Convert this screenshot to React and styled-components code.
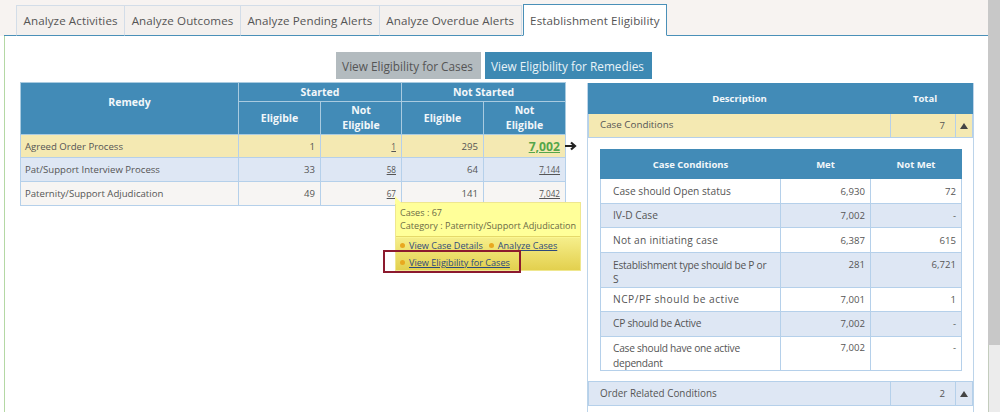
import React from "react";
import styled, { createGlobalStyle } from "styled-components";

const Global = createGlobalStyle`
  html, body { margin: 0; padding: 0; background: #fff; overflow: hidden; }
  body { font-family: "Open Sans", "Liberation Sans", sans-serif; font-size: 10.5px; color: #555; }
  * { box-sizing: border-box; }
`;

const Page = styled.div`
  width: 1000px; height: 412px; display: flex; overflow: hidden; background: #fff;
`;
const Main = styled.div`
  width: 988px; height: 412px; display: flex; flex-direction: column;
`;
const Scrollbar = styled.div`
  width: 12px; height: 412px; background: #ececec; border-left: 1px solid #c3ccbd;
  display: flex; flex-direction: column; flex: none;
`;
const Thumb = styled.div`
  height: 345px; background: #c8c8c8; margin-left: -1px;
`;
const TabHeader = styled.div`
  height: 36px; background: #f7f3f1; padding-top: 5px;
`;
const TabBar = styled.div`
  height: 31px; padding-left: 12px; margin-left: 4px; display: flex; align-items: stretch;
  border-bottom: 1px solid #4a90b8;
`;
const Tab = styled.div`
  padding: 0 6.5px; display: flex; align-items: center; font-size: 11.6px; letter-spacing: 0.1px; color: #555;
  background: #f3f0ee; height: 31px;
  border: 1px solid #d3dde8; border-left-width: ${p => (p.$first ? 1 : 0)}px;
  border-bottom: 1px solid #4a90b8;
`;
const ActiveTab = styled(Tab)`
  background: #fff; height: 32px; margin: -1px 0 0 1px; padding-top: 1px;
  border: 1px solid #4a90b8; border-bottom: 1px solid #fff;
`;
const Content = styled.div`
  flex: 1; margin-left: 4px; border-left: 1px solid #b4d8a4; background: #fff; padding: 16px 14px 0 15px;
`;
const Buttons = styled.div`
  display: flex; justify-content: center; gap: 4px; padding-right: 6px;
`;
const Btn = styled.div`
  height: 27px; padding: 0 8px 0 6px; display: flex; align-items: center; font-size: 11.8px;
  background: ${p => (p.$on ? "#3d89b3" : "#b3bbbf")};
  color: ${p => (p.$on ? "#e9f3f8" : "#555")};
`;
const Columns = styled.div`
  display: flex; align-items: flex-start; margin-top: 3px;
`;
const LeftCol = styled.div`
  width: 545px; position: relative; flex: none;
`;
const RightCol = styled.div`
  width: 387px; margin-left: 22px; flex: none; height: 330px; border-right: 1px solid #bcd4ea; border-left: 1px solid #bcd4ea; margin-top: 1px;
`;
const Table = styled.table`
  border-collapse: collapse; table-layout: fixed; width: 100%;
`;
const Th = styled.th`
  background: #428bb7; color: #f2f7fa; font-weight: 700; font-size: 10.5px; line-height: 15px; padding: 0 4px ${p => p.$pb || 0}px;
  border: 1px solid #a9cbe0; height: ${p => p.$h || 19}px; text-align: center;
`;
const PlainTh = styled(Th)`
  border-color: #428bb7; font-size: 9.5px; padding-left: ${p => p.$pl || 4}px;
`;
const Td = styled.td`
  font-size: ${p => p.$size || 9.6}px; padding: 0 ${p => (p.$right ? 5 : 4)}px; height: ${p => p.$h || 24}px; color: #555;
  border: 1px solid #b5d0ea;
  text-align: ${p => (p.$right ? "right" : "left")};
  background: ${p => p.$bg || "#fff"};
  vertical-align: ${p => (p.$top ? "top" : "middle")};
  padding-top: ${p => (p.$top ? 4.5 : 0)}px;
  letter-spacing: ${p => p.$ls || 0}px;
`;
const Num = styled.span`
  font-size: 8.2px; text-decoration: underline; color: #555;
`;
const BigNum = styled.span`
  font-size: 12.2px; font-weight: 700; color: #55a64a; text-decoration: underline;
`;
const Arrow = styled.svg`
  position: absolute; left: 545px; top: 59px;
`;
const Tip = styled.div`
  position: absolute; left: 375px; top: 120px; width: 186px; height: 69px;
  background: linear-gradient(#ffff99 0, #ffff99 34px, #f5ee8a 35px, #e3d04e 100%);
  border: 1px solid #efe78f; color: #6a6a45; font-size: 9.1px; line-height: 13px;
`;
const TipTail = styled.svg`
  position: absolute; left: -1px; top: -7px;
`;
const TipHead = styled.div`
  padding: 3px 0 0 4px; height: 34px; white-space: nowrap; border-bottom: 1px solid #e6d96a;
`;
const TipLine = styled.div``;
const TipRow = styled.div`
  display: flex; gap: 6px; padding-left: 4px; height: 17px; align-items: center;
`;
const TipLink = styled.span`
  display: inline-flex; align-items: center; gap: 4px; white-space: nowrap; color: #2d4a7c;
  & > u { text-decoration: underline; }
`;
const Dot = styled.i`
  width: 5px; height: 5px; border-radius: 50%; background: #e8a820; display: block;
`;
const Highlight = styled.div`
  position: absolute; left: 363px; top: 168px; width: 138px; height: 23px; border: 2.5px solid #8c1a2e; pointer-events: none;
`;
const Inner = styled.div`
  padding: 11px 11px 10px 12px;
`;
const CollapseTd = styled(Td)`
  text-align: center; padding: 0;
`;
const Caret = styled.svg`
  display: block; margin: 0 auto;
`;
const CellIndent = styled(Td)`
  padding-left: ${p => p.$pl || 12}px; line-height: 14.5px; padding-right: 10px;
`;

const yellow = "#f4e9b2", blue = "#dee7f4", gray = "#f7f5f3";

const remedies = [
  ["Agreed Order Process", "1", "1", "295", "7,002", yellow, 23],
  ["Pat/Support Interview Process", "33", "58", "64", "7,144", blue, 24],
  ["Paternity/Support Adjudication", "49", "67", "141", "7,042", gray, 24],
];
const conditions = [
  ["Case should Open status", "6,930", "72", "#fff", 25, 0],
  ["IV-D Case", "7,002", "-", blue, 24, 0],
  ["Not an initiating case", "6,387", "615", "#fff", 25, 0.25],
  ["Establishment type should be P or S", "281", "6,721", blue, 33, -0.26],
  ["NCP/PF should be active", "7,001", "1", "#fff", 24, 0.5],
  ["CP should be Active", "7,002", "-", blue, 25, -0.26],
  ["Case should have one active dependant", "7,002", "-", "#fff", 33, -0.26],
];

const Up = () => (
  <Caret width="8" height="6" viewBox="0 0 8 6"><path d="M4 0 L8 6 L0 6 Z" fill="#444" /></Caret>
);

export default function App() {
  return (
    <Page>
      <Global />
      <Main>
        <TabHeader>
          <TabBar>
            <Tab $first>Analyze Activities</Tab>
            <Tab>Analyze Outcomes</Tab>
            <Tab>Analyze Pending Alerts</Tab>
            <Tab>Analyze Overdue Alerts</Tab>
            <ActiveTab>Establishment Eligibility</ActiveTab>
          </TabBar>
        </TabHeader>
        <Content>
          <Buttons>
            <Btn>View Eligibility for Cases</Btn>
            <Btn $on>View Eligibility for Remedies</Btn>
          </Buttons>
          <Columns>
            <LeftCol>
              <Table>
                <colgroup>
                  <col style={{ width: 218 }} /><col style={{ width: 82 }} /><col style={{ width: 81 }} /><col style={{ width: 82 }} /><col style={{ width: 82 }} />
                </colgroup>
                <thead>
                  <tr>
                    <Th rowSpan={2} $pb={13}>Remedy</Th>
                    <Th colSpan={2}>Started</Th>
                    <Th colSpan={2}>Not Started</Th>
                  </tr>
                  <tr>
                    <Th $h={33}>Eligible</Th>
                    <Th $h={33}>Not<br />Eligible</Th>
                    <Th $h={33}>Eligible</Th>
                    <Th $h={33}>Not<br />Eligible</Th>
                  </tr>
                </thead>
                <tbody>
                  {remedies.map(r => (
                    <tr key={r[0]}>
                      <Td $h={r[6]} $bg={r[5]}>{r[0]}</Td>
                      <Td $h={r[6]} $right $bg={r[5]}>{r[1]}</Td>
                      <Td $h={r[6]} $right $bg={r[5]}><Num>{r[2]}</Num></Td>
                      <Td $h={r[6]} $right $bg={r[5]}>{r[3]}</Td>
                      <Td $h={r[6]} $right $bg={r[5]}>{r[4] === "7,002" ? <BigNum>{r[4]}</BigNum> : <Num>{r[4]}</Num>}</Td>
                    </tr>
                  ))}
                </tbody>
              </Table>
              <Arrow width="12" height="10" viewBox="0 0 12 10">
                <path d="M0 5 H9 M6 1.5 L10 5 L6 8.5" stroke="#222" strokeWidth="2.2" fill="none" />
              </Arrow>
              <Tip>
                <TipTail width="8" height="8" viewBox="0 0 8 8"><path d="M0 0 L0 8 L7 8 Z" fill="#ffff99" /></TipTail>
                <TipHead>
                  <TipLine>Cases : 67</TipLine>
                  <TipLine>Category : Paternity/Support Adjudication</TipLine>
                </TipHead>
                <TipRow>
                  <TipLink><Dot /><u>View Case Details</u></TipLink>
                  <TipLink><Dot /><u>Analyze Cases</u></TipLink>
                </TipRow>
                <TipRow>
                  <TipLink><Dot /><u>View Eligibility for Cases</u></TipLink>
                </TipRow>
              </Tip>
              <Highlight />
            </LeftCol>
            <RightCol>
              <Table>
                <colgroup><col /><col style={{ width: 65 }} /><col style={{ width: 17 }} /></colgroup>
                <thead>
                  <tr>
                    <PlainTh $h={30}>Description</PlainTh>
                    <PlainTh $h={30} $pl={8}>Total</PlainTh>
                    <PlainTh $h={30} />
                  </tr>
                </thead>
                <tbody>
                  <tr>
                    <CellIndent $pl={11} $size={9.8} $bg={yellow}>Case Conditions</CellIndent>
                    <Td $right $bg={yellow}>7&nbsp;&nbsp;</Td>
                    <CollapseTd $bg={yellow}><Up /></CollapseTd>
                  </tr>
                </tbody>
              </Table>
              <Inner>
                <Table>
                  <colgroup><col /><col style={{ width: 90 }} /><col style={{ width: 91 }} /></colgroup>
                  <thead>
                    <tr>
                      <PlainTh $h={29}>Case Conditions</PlainTh>
                      <PlainTh $h={29}>Met</PlainTh>
                      <PlainTh $h={29}>Not Met</PlainTh>
                    </tr>
                  </thead>
                  <tbody>
                    {conditions.map(c => (
                      <tr key={c[0]}>
                        <CellIndent $size={10.2} $ls={c[5]} $h={c[4]} $bg={c[3]} $top={c[4] === 33}>{c[0]}</CellIndent>
                        <Td $right $bg={c[3]} $top={c[4] === 33}>{c[1]}</Td>
                        <Td $right $bg={c[3]} $top={c[4] === 33}>{c[2]}</Td>
                      </tr>
                    ))}
                  </tbody>
                </Table>
              </Inner>
              <Table>
                <colgroup><col /><col style={{ width: 65 }} /><col style={{ width: 17 }} /></colgroup>
                <tbody>
                  <tr>
                    <CellIndent $pl={11} $size={9.9} $bg={blue}>Order Related Conditions</CellIndent>
                    <Td $right $bg={blue}>2&nbsp;&nbsp;</Td>
                    <CollapseTd $bg={blue}><Up /></CollapseTd>
                  </tr>
                </tbody>
              </Table>
            </RightCol>
          </Columns>
        </Content>
      </Main>
      <Scrollbar><Thumb /></Scrollbar>
    </Page>
  );
}
